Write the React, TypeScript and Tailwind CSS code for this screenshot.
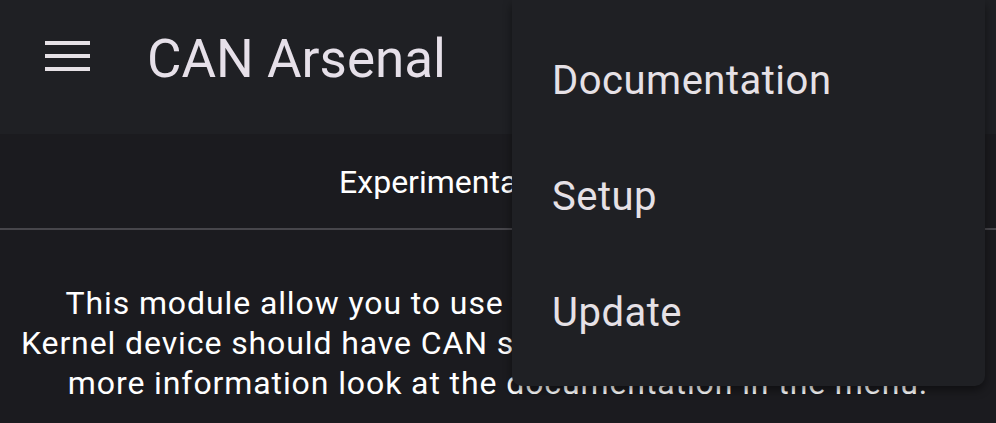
export default function App() {
  return (
    <div
      className="relative h-[423px] w-[996px] overflow-hidden bg-[#1b1b1f] text-[#e4e2e6]"
      style={{ fontFamily: "Roboto, 'Noto Sans', sans-serif" }}
    >
      <header className="flex h-[134px] items-start bg-[#1f2024]">
        <button type="button" className="ml-[45px] mt-[41px] flex w-[45px] flex-col gap-[9px]">
          <span className="h-[4px] w-full bg-[#e6e1e6]" />
          <span className="h-[4px] w-full bg-[#e6e1e6]" />
          <span className="h-[4px] w-full bg-[#e6e1e6]" />
        </button>
        <h1 className="ml-[57px] mt-[33px] text-[53px] leading-none text-[#e6e0e9]">
          CAN Arsenal
        </h1>
      </header>

      <div className="flex h-[96px] items-center justify-center border-b-2 border-[#47464b]">
        <span className="mt-[2px] text-[32px] leading-none text-white">Experimental Features</span>
      </div>

      <p className="mt-[53px] whitespace-nowrap text-center text-[32px] leading-[40px] tracking-[0.9px] text-white">
        This module allow you to use the CAN Arsenal tools. Your
        <br />
        Kernel device should have CAN support enabled to be used. For
        <br />
        more information look at the documentation in the menu.
      </p>

      <div className="absolute left-[512px] top-0 h-[386px] w-[473px] rounded-b-[10px] bg-[#1f2024] pt-[23px] shadow-[0_4px_10px_rgba(0,0,0,0.45)]">
        {["Documentation", "Setup", "Update"].map((item) => (
          <div
            key={item}
            className="flex h-[116px] items-center pl-[40px] text-[40px] leading-none tracking-[0.5px] text-[#e6e1e6]"
          >
            {item}
          </div>
        ))}
      </div>
    </div>
  );
}
